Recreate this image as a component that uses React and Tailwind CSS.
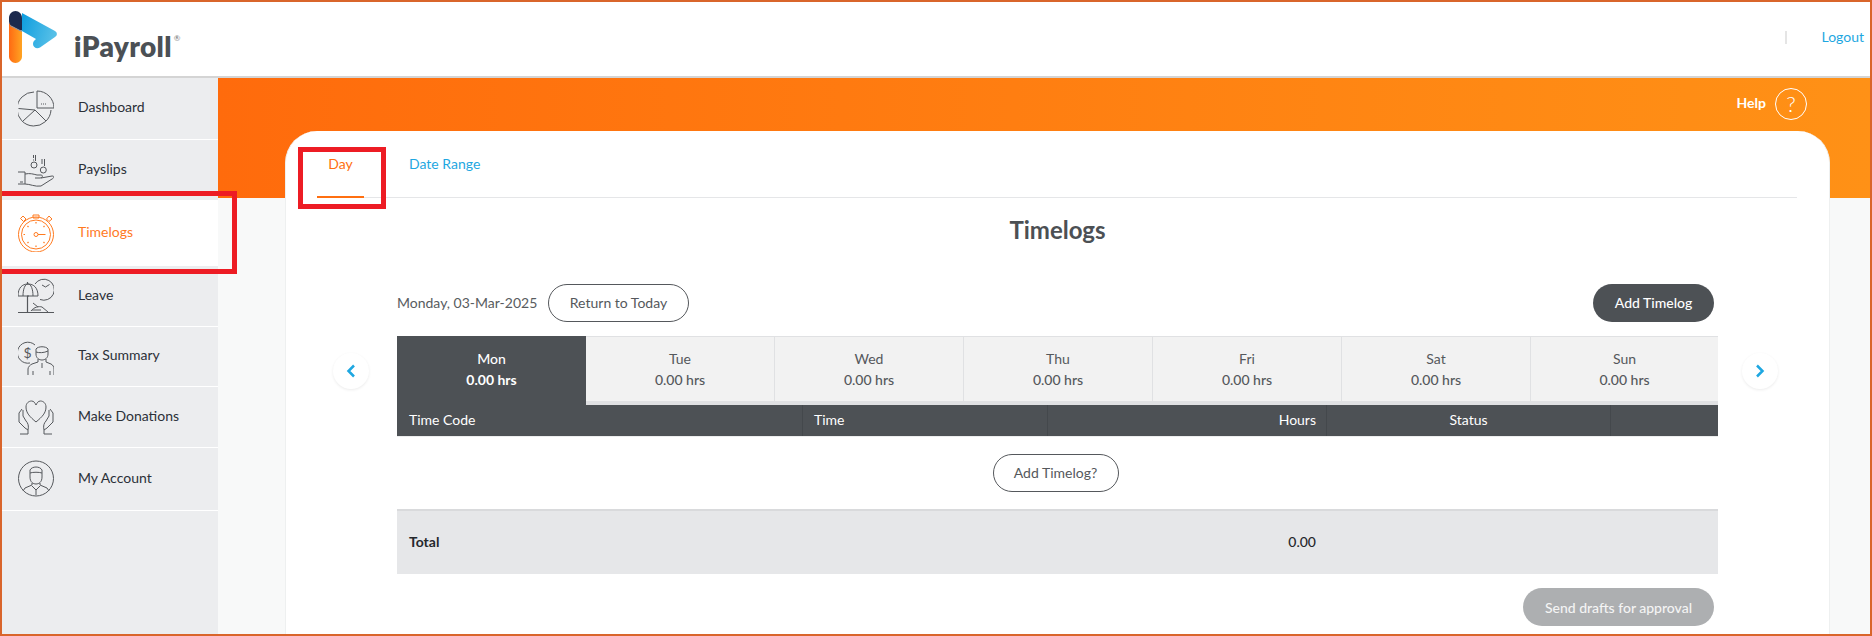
import React from "react";

const Ic = ({ children, color = "#55585c" }) => (
  <svg width="36" height="38" viewBox="0 0 36 38" fill="none" stroke={color} strokeWidth="1" className="shrink-0">
    {children}
  </svg>
);

const DashboardIcon = () => (
  <Ic>
    <path d="M19 1A17 17 0 0 1 36 18H19Z" />
    <path d="M16 2A17 17 0 1 0 33 20" />
    <path d="M0.5 18.500L17 20M17 20L5 31M17 20L28 31" />
    <path d="M23 14h1M25 14h1M27 14h1" />
  </Ic>
);
const PayslipsIcon = () => (
  <Ic>
    <circle cx="16" cy="14" r="3" />
    <circle cx="25.300" cy="19" r="3" />
    <path d="M15.500 4v3M15.500 8.500v1M17.500 4v6M24 8v5M26.500 8v7" />
    <path d="M0 21h7v12H0M7 23c5-1 8 0 12 1h4c2 0 2 3-1 3h-5M23 27l11-2c3 0 2 2 0 3l-11 7c-6 1-11-2-16-2" />
    <path d="M2 31h3" />
  </Ic>
);
const TimelogsIcon = () => (
  <Ic color="#ff7a1f">
    <circle cx="18" cy="20.500" r="17.500" />
    <circle cx="18" cy="20.500" r="14.500" />
    <path d="M15 1h6v3h-2v0h-2v0h-2z" />
    <path d="M5 2l3 3-2.500 2.500-3-3zM31 2l3 3-3 2.500-2.500-2.500z" />
    <circle cx="18" cy="20.500" r="2" />
    <path d="M20 20.500h7.500" />
    <path d="M18 8v1.500M18 31.500v1.500M5.500 20.500H7M9.500 12l1 1M26.500 12l-1 1M9.500 29l1-1M26.500 29l-1-1" strokeWidth="1.200" />
  </Ic>
);
const LeaveIcon = () => (
  <Ic>
    <path d="M0 19C0 11 4 7 10 7s10 4 10 12ZM5 19c0-7 2-12 5-12s5 5 5 12M9 19h2" />
    <path d="M9.500 5v2M9.500 19v16" strokeWidth="1.200" />
    <path d="M17 7A10.500 10.500 0 1 1 22 22.500" />
    <path d="M24 8l3.500 2 4-2.500" />
    <path d="M0 35.500h36" strokeWidth="1.200" />
    <path d="M15 26l5 4M13 34c3-4 8-5 11-4l6 5M14 33h9" />
  </Ic>
);
const TaxIcon = () => (
  <Ic>
    <path d="M17 7A10.500 10.500 0 1 0 12 25" />
    <text x="5.500" y="20" fontSize="14" fontFamily="Lato, sans-serif" fill="#55585c" stroke="none">$</text>
    <path d="M18 11c2-3 10-3 12 0v5c0 4-3 6-6 6s-6-2-6-6Z M18 14c3 1 8 1 12-1" />
    <path d="M20 21v3l-6 2c-2 1-4 3-4 5v6M28 21v3l5 2c2 1 3 3 3 5v6M24 25v5M15 33v4M32 33v4" />
  </Ic>
);
const DonationsIcon = () => (
  <Ic>
    <path d="M18 24C12 19 8 15 8 9c0-4 3-6 5.500-6S17 5 18 7c1-2 2-4 4.500-4S28 5 28 9c0 6-4 10-10 15Z" />
    <path d="M4 11l-3 4v9l6 6 3 2v4M10 32c1-4 0-7-2-9l-3-5v-6M2 36h8" />
    <path d="M32 11l3 4v9l-6 6-3 2v4M26 32c-1-4 0-7 2-9l3-5v-6M26 36h8" />
  </Ic>
);
const AccountIcon = () => (
  <Ic>
    <circle cx="18" cy="18.500" r="17.500" />
    <path d="M12 10c2-4 10-4 12 0v7c0 5-3 7-6 7s-6-2-6-7Z" />
    <path d="M12 13c3-1 9-1 12 0" />
    <path d="M14 23v2l-7 3-2 3M22 23v2l7 3 2 3M14 26l4 4 4-4M18 30v5" />
  </Ic>
);

const nav = [
  { label: "Dashboard", icon: <DashboardIcon />, cls: "h-[62px] border-b border-white" },
  { label: "Payslips", icon: <PayslipsIcon />, cls: "h-[60px]" },
  { label: "Timelogs", icon: <TimelogsIcon />, cls: "h-[66px] bg-white text-[#ff7a1f]", active: true },
  { label: "Leave", icon: <LeaveIcon />, cls: "h-[61px] border-b border-white" },
  { label: "Tax Summary", icon: <TaxIcon />, cls: "h-[60px] border-b border-white" },
  { label: "Make Donations", icon: <DonationsIcon />, cls: "h-[61px] border-b border-white" },
  { label: "My Account", icon: <AccountIcon />, cls: "h-[63px] border-b border-white" },
];

const days = ["Mon", "Tue", "Wed", "Thu", "Fri", "Sat", "Sun"];

const Logo = () => (
  <svg width="48" height="54" viewBox="0 0 48 54" className="shrink-0">
    <defs>
      <linearGradient id="lo" x1="0" x2="1" y1="0" y2="0">
        <stop offset="0" stopColor="#ff6a13" />
        <stop offset="1" stopColor="#ffa422" />
      </linearGradient>
      <linearGradient id="lb" x1="0" x2="1" y1="0" y2="0.300">
        <stop offset="0" stopColor="#0d9ddf" />
        <stop offset="1" stopColor="#55bfe7" />
      </linearGradient>
    </defs>
    <path d="M13 2L46 20c2.500 1.500 2.500 4.500 0 6L31 36.500c-3 2-7 0-7-3.500 0-2 1-3.500 3-5L13 20Z" fill="url(#lb)" />
    <path d="M0 12L13 20V45.500c0 3.500-3 6.500-6.500 6.500S0 49 0 45.500Z" fill="url(#lo)" />
    <path d="M0 7C0 3 3 0 6.500 0S13 3 13 7V19.500L10 19L2 14.500C0.500 13 0 12 0 10Z" fill="#1c2a4d" />
    <path d="M1 14.500L13 20.500" stroke="#8c97aa" strokeWidth="1" fill="none" />
  </svg>
);

export default function App() {
  return (
    <div className="relative flex h-[636px] w-[1872px] flex-col overflow-hidden border-2 border-[#d9652b] bg-[#f8f9f9] font-['Lato',sans-serif] text-[14px] text-[#55585c]">
      {/* Top bar */}
      <header className="flex h-[76px] shrink-0 items-start justify-between border-b-2 border-[#d4d4d4] bg-white">
        <div className="flex items-start">
          <div className="ml-[7px] mt-[9px]"><Logo /></div>
          <div className="ml-[17px] mt-[24px] flex items-start">
            <span className="text-[28px] font-extrabold leading-[40px] tracking-[0.35px] text-[#4b5055]">iPayroll</span>
            <span className="ml-[2px] mt-[7px] text-[8px] leading-[10px] text-[#777]">®</span>
          </div>
        </div>
        <div className="mr-[6px] mt-[25px] flex items-center">
          <span className="h-[13px] w-[2px] bg-[#e5e5e5]" />
          <a className="ml-[34px] text-[14px] leading-[20px] text-[#1ea7e1]">Logout</a>
        </div>
      </header>

      <div className="flex min-h-0 flex-1">
        {/* Sidebar */}
        <aside className="w-[216px] shrink-0 bg-[#ecedef]">
          {nav.map((n) => (
            <div key={n.label} className={`flex items-center pl-[16px] ${n.cls} ${n.active ? "" : "text-[#2b3038]"}`}>
              {n.icon}
              <span className="mb-[3px] ml-[24px] leading-[20px]">{n.label}</span>
            </div>
          ))}
        </aside>

        {/* Main */}
        <main className="min-w-0 flex-1">
          <div className="flex h-[120px] items-start justify-end bg-gradient-to-r from-[#ff6b0c] to-[#ff9116] pr-[63px] pt-[10px]">
            <span className="mr-[9px] mt-[5px] font-bold leading-[20px] text-white">Help</span>
            <span className="flex h-[32px] w-[32px] items-center justify-center rounded-full border border-white text-[22px] font-light leading-none text-white">?</span>
          </div>

          <section className="ml-[67px] mr-[40px] mt-[-67px] h-[600px] rounded-t-[32px] border-x border-[#eef0f0] bg-white">
            {/* Tabs */}
            <div className="ml-[31px] mr-[32px] flex h-[67px] border-b border-[#e5e6e8]">
              <div className="flex h-[67px] w-[47px] justify-center border-b-2 border-[#ff6f10] pt-[23px] leading-[20px] text-[#ff6f10]">Day</div>
              <div className="ml-[45px] pt-[23px] leading-[20px] text-[#1ea7e1]">Date Range</div>
            </div>

            <h1 className="mt-[14px] pb-[1px] text-center text-[24px] font-bold leading-[36px] text-[#4c5054]">Timelogs</h1>

            <div className="ml-[111px] mr-[115px] mt-[35px] flex h-[38px] items-center">
              <span className="mb-[2px] w-[151px] text-[#585c60]">Monday, 03-Mar-2025</span>
              <button className="h-[38px] w-[141px] rounded-full border border-[#55585c] pb-[2px] text-[#55585c]">Return to Today</button>
              <button className="ml-auto h-[38px] w-[121px] rounded-full bg-[#4d5155] pb-[2px] font-medium text-white">Add Timelog</button>
            </div>

            <div className="mt-[14px] flex items-start">
              <button className="ml-[47px] mt-[17px] flex h-[36px] w-[36px] shrink-0 items-center justify-center rounded-full bg-white shadow-[0_1px_3px_rgba(0,0,0,0.08)]">
                <svg width="10" height="14" viewBox="0 0 10 14" fill="none" stroke="#1ea7e1" strokeWidth="2.500"><path d="M8 1.500L2.500 7L8 12.500" /></svg>
              </button>

              <div className="ml-[28px] w-[1321px] shrink-0">
                <div className="flex h-[69px]">
                  {days.map((d, i) =>
                    i === 0 ? (
                      <div key={d} className="flex w-[189px] flex-col items-center bg-[#4d5155] pt-[13px] leading-[20px] text-white">
                        <span className="font-medium">{d}</span>
                        <span className="mt-[1px] font-bold">0.00 hrs</span>
                      </div>
                    ) : (
                      <div key={d} className="flex w-[189px] flex-col items-center border-b-4 border-r border-t border-[#e0e1e3] bg-[#f2f2f2] pt-[12px] leading-[20px] text-[#55585c] last:w-[187px] last:border-r-0">
                        <span>{d}</span>
                        <span className="mt-[1px] font-medium">0.00 hrs</span>
                      </div>
                    )
                  )}
                </div>
                <div className="flex h-[32px] items-start border-b border-[#eceded] bg-[#4d5155] leading-[29px] text-white">
                  <div className="h-[31px] w-[406px] border-r border-[#44484c] pl-[12px]">Time Code</div>
                  <div className="h-[31px] w-[245px] border-r border-[#44484c] pl-[11px]">Time</div>
                  <div className="h-[31px] w-[279px] border-r border-[#44484c] pr-[10px] text-right">Hours</div>
                  <div className="h-[31px] w-[284px] border-r border-[#44484c] text-center">Status</div>
                  <div className="h-[31px] flex-1" />
                </div>
                <div className="flex h-[72px] justify-center pr-[4px] pt-[17px]">
                  <button className="h-[38px] w-[126px] rounded-full border border-[#55585c] pb-[2px] text-[#55585c]">Add Timelog?</button>
                </div>
                <div className="flex h-[65px] items-center border-t-2 border-[#d9dadc] bg-[#e6e7e9] pb-[2px] text-[#25282c]">
                  <span className="pl-[12px] font-bold">Total</span>
                  <span className="ml-auto mr-[402px] font-medium">0.00</span>
                </div>
                <div className="mt-[14px] flex justify-end pr-[4px]">
                  <button className="h-[38px] w-[191px] rounded-full bg-[#adafb1] font-medium text-[#f4f4f4]">Send drafts for approval</button>
                </div>
              </div>

              <button className="ml-[24px] mt-[17px] flex h-[36px] w-[36px] shrink-0 items-center justify-center rounded-full bg-white shadow-[0_1px_3px_rgba(0,0,0,0.08)]">
                <svg width="10" height="14" viewBox="0 0 10 14" fill="none" stroke="#1ea7e1" strokeWidth="2.500"><path d="M2 1.500L7.500 7L2 12.500" /></svg>
              </button>
            </div>
          </section>
        </main>
      </div>

      {/* Annotation rectangles drawn over the page */}
      <div className="absolute left-0 top-[189px] h-[83px] w-[235px] border-y-[5px] border-r-[5px] border-[#ed1c24]" />
      <div className="absolute left-[296px] top-[145px] h-[62px] w-[88px] border-[5px] border-[#ed1c24]" />
    </div>
  );
}
